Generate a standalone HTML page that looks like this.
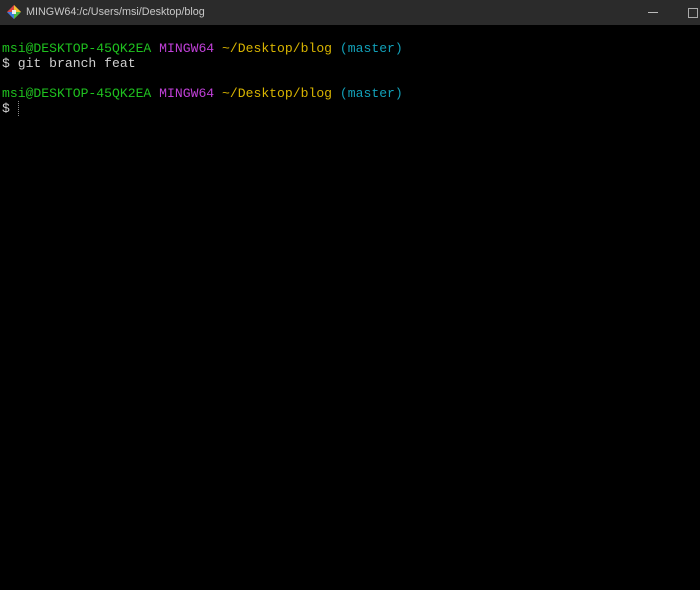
<!DOCTYPE html>
<html><head><style>
body{margin:0;width:700px;height:590px;background:#000;overflow:hidden;font-family:"Liberation Mono",monospace}
.tb{position:absolute;left:0;top:0;width:700px;height:25px;background:#2b2b2b}
.tt{position:absolute;left:26px;top:6px;font:10.8px "Liberation Sans",sans-serif;color:#c8c8c8}
.term{position:absolute;left:2px;top:41px;font-size:13.1px;line-height:15px;color:#d0d0d0;white-space:pre}
.g{color:#1fc21f}.m{color:#c040d8}.y{color:#d8b400}.c{color:#12a0b8}
</style></head><body>
<div class="tb">
<svg style="position:absolute;left:7px;top:5px" width="14" height="14" viewBox="0 0 14 14">
<path d="M7 0L14 7L7 14L0 7Z" fill="#d44"/><path d="M7 0L14 7L7 7Z" fill="#f4c030"/><path d="M0 7L7 7L7 14Z" fill="#3a7ae0"/><path d="M7 7L14 7L7 14Z" fill="#4b4"/><rect x="5" y="5" width="4" height="4" fill="#eee"/></svg>
<div class="tt">MINGW64:/c/Users/msi/Desktop/blog</div>
<div style="position:absolute;left:648px;top:12px;width:10px;height:1px;background:#bbb"></div>
<div style="position:absolute;left:688px;top:8px;width:8px;height:8px;border:1px solid #aaa"></div>
</div>
<div class="term"><span class="g">msi@DESKTOP-45QK2EA</span> <span class="m">MINGW64</span> <span class="y">~/Desktop/blog</span> <span class="c">(master)</span>
$ git branch feat

<span class="g">msi@DESKTOP-45QK2EA</span> <span class="m">MINGW64</span> <span class="y">~/Desktop/blog</span> <span class="c">(master)</span>
$ <span style="border-left:1px dotted #888"> </span></div>
</body></html>
